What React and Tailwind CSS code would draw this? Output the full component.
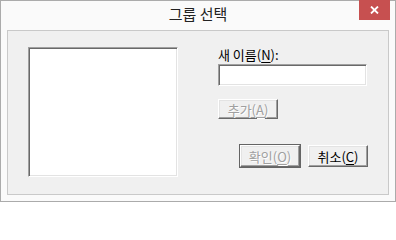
const font = { fontFamily: '"Noto Sans CJK KR", "Noto Sans", sans-serif' };

const raised =
  "border border-t-white border-l-white border-r-[#696969] border-b-[#696969] shadow-[inset_-1px_-1px_#a0a0a0,inset_1px_1px_#e3e3e3]";
const sunken =
  "border border-t-[#a0a0a0] border-l-[#a0a0a0] border-r-white border-b-white shadow-[inset_1px_1px_#696969,inset_-1px_-1px_#e3e3e3]";

const Key = ({ children }) => (
  <u className="underline underline-offset-[2px] decoration-1">{children}</u>
);

const DialogButton = ({ children, disabled, isDefault, className = "" }) => (
  <button
    className={`flex items-center justify-center bg-[#f0f0f0] text-[13px] leading-none ${raised} ${
      isDefault ? "outline outline-1 outline-[#646464]" : ""
    } ${
      disabled
        ? "text-[#a0a0a0] [text-shadow:1px_1px_0_#ffffff]"
        : "text-black"
    } ${className}`}
  >
    {children}
  </button>
);

export default function App() {
  return (
    <div
      className="w-[396px] h-[202px] flex flex-col border border-[#ababab] bg-[#fafafa]"
      style={font}
    >
      {/* title bar */}
      <div className="h-[29px] grid grid-cols-[1fr_auto_1fr] items-start">
        <div />
        <div className="pt-[3px] text-[15px] leading-[20px] text-[#222]">
          그룹 선택
        </div>
        <div className="flex justify-end pr-[5px] -mt-px">
          <div className="w-[31px] h-[20px] bg-[#c75050] flex items-center justify-center">
            <svg width="9" height="8" viewBox="0 0 9 8">
              <path
                d="M1 0.5 L8 7.5 M8 0.5 L1 7.5"
                stroke="#ffffff"
                strokeWidth="1.8"
              />
            </svg>
          </div>
        </div>
      </div>

      {/* client area */}
      <div className="flex-1 px-[6px] pb-[6px]">
        <div className="h-full border border-[#c9c9c9] bg-[#f0f0f0] flex pt-[16px] pl-[20px]">
          <div className={`w-[150px] h-[130px] bg-white ${sunken}`} />

          <div className="ml-[40px] w-[150px] flex flex-col">
            <div className="text-[13px] leading-[15px] text-black">
              새 이름(<Key>N</Key>):
            </div>
            <div className={`mt-[2px] w-[149px] h-[22px] bg-white ${sunken}`} />
            <DialogButton disabled className="mt-[13px] w-[60px] h-[20px]">
              추가(<Key>A</Key>)
            </DialogButton>
            <div className="mt-[26px] flex justify-end gap-[8px]">
              <DialogButton disabled isDefault className="w-[60px] h-[22px]">
                확인(<Key>O</Key>)
              </DialogButton>
              <DialogButton className="w-[60px] h-[22px]">
                취소(<Key>C</Key>)
              </DialogButton>
            </div>
          </div>
        </div>
      </div>
    </div>
  );
}
